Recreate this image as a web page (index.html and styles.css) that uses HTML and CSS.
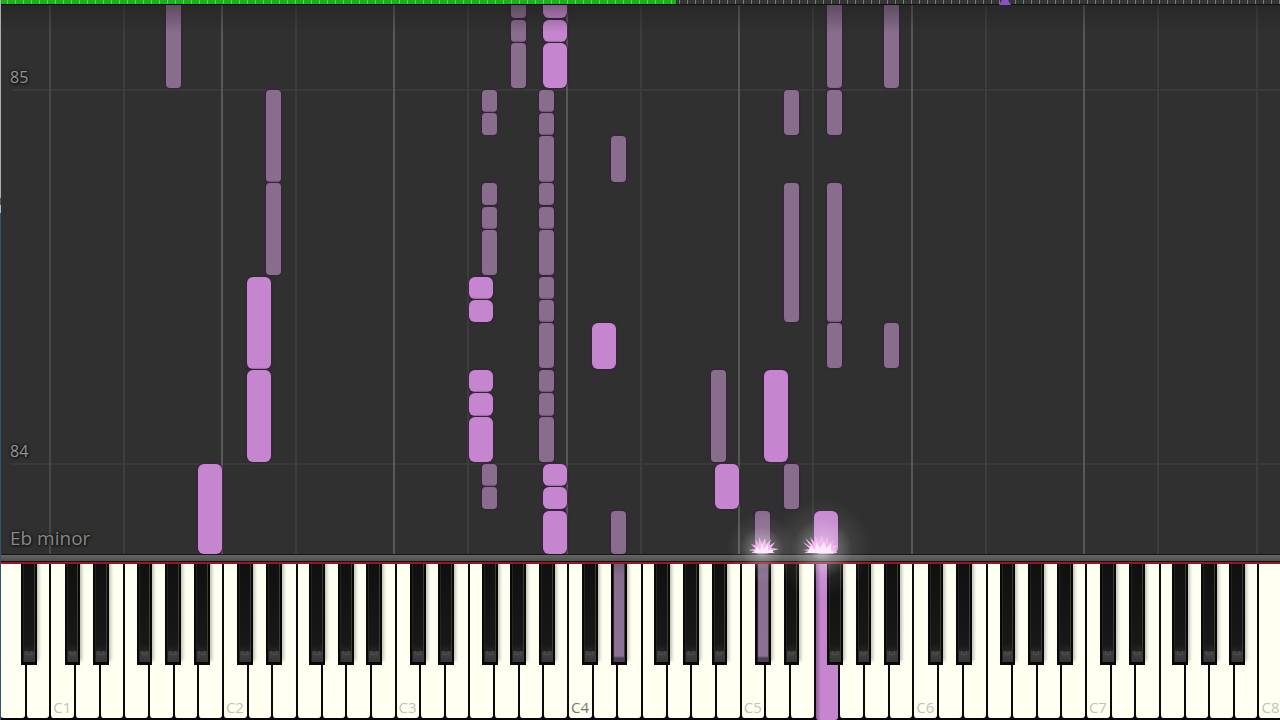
FILE: index.html
```html
<!DOCTYPE html>
<html lang="en">
<head>
<meta charset="utf-8">
<title>Piano roll</title>
<link rel="stylesheet" href="styles.css">
</head>
<body>
<main class="player">
  <div class="timeline">
    <div class="played"></div>
    <div class="ticks"></div>
    <svg class="marker" viewBox="0 0 12 5"><path d="M0 5L3 0H9L12 5Z"/></svg>
  </div>
  <section class="roll" id="roll">
    <div class="notes" id="notes"></div>
    <div class="fade"></div>
    <span class="measure m85">85</span>
    <span class="measure m84">84</span>
    <span class="scale">Eb minor</span>
    <svg class="spark spark-a" viewBox="0 0 110 110">
      <defs>
        <radialGradient id="glow">
          <stop offset="0" stop-color="#fff" stop-opacity=".7"/>
          <stop offset=".25" stop-color="#fff" stop-opacity=".3"/>
          <stop offset=".6" stop-color="#fff" stop-opacity=".07"/>
          <stop offset="1" stop-color="#fff" stop-opacity="0"/>
        </radialGradient>
        <clipPath id="above"><rect width="110" height="54"/></clipPath>
      </defs>
      <circle cx="54" cy="50" r="36" fill="url(#glow)"/>
      <g clip-path="url(#above)">
        <path fill="#f6bdf2" d="M42 55L46 52L40 51L48 50L43 45L49 47L47 40L51 46L51 38L54 45L57 39L58 46L63 40L61 47L67 43L63 49L71 50L64 52L68 55Z"/>
        <path fill="#ffe9ff" d="M46 55L49 48L52 51L54 44L56 50L60 45L60 51L65 51L64 55Z"/>
      </g>
    </svg>
    <svg class="spark spark-b" viewBox="0 0 110 110">
      <circle cx="57" cy="50" r="50" fill="url(#glow)"/>
      <g clip-path="url(#above)">
        <path fill="#f5b9ef" d="M37 55L43 52L38 51L45 50L38 43L46 48L40 39L48 46L45 38L51 45L50 37L54 43L57 36L59 44L63 38L63 45L69 41L66 47L72 46L70 51L73 55Z"/>
        <path fill="#ffeaff" d="M42 55L46 47L50 51L51 43L55 49L59 43L61 49L66 45L66 51L71 55Z"/>
      </g>
    </svg>
  </section>
  <div class="rail"></div>
  <section class="keyboard"><div class="keys" id="keys"></div></section>
</main>
<script src="piano.js"></script>
</body>
</html>
```
FILE: styles.css
```css
* { box-sizing: border-box; }
body { margin: 0; background: #000; font-family: "Open Sans", "Noto Sans", sans-serif; }
.player { position: relative; display: flex; flex-direction: column; height: 100vh; overflow: hidden; }
.player::after {
  content: ""; position: absolute; left: 0; top: 0; bottom: 0; width: 1px;
  background: linear-gradient(#a9adad 0 27.5%, #555 27.5% 28.5%, #b4b8b8 28.5% 29.6%, #2e536d 29.6%);
}
.timeline { position: relative; flex: none; height: 5px; background: #343434; border-bottom: 1px solid #111; }
.played { width: 52.8%; height: 100%; background: #1fae1f; }
.ticks {
  position: absolute; inset: 0;
  background: repeating-linear-gradient(90deg, transparent 0 7px, #c8ffc866 7px 8px);
}
.marker { position: absolute; left: 78.05%; top: 0; width: 12px; height: 5px; fill: #8c4fc4; }
.roll { position: relative; flex: 1; background: #303030; }
.line, .bar { position: absolute; background: #3d3d3d; }
.line { top: 0; bottom: 0; width: 2px; }
.line.c { background: #585858; }
.line.edge { background: #494949; }
.bar { left: 1%; right: 0; height: 2px; background: #3a3a3a; }
.notes { position: absolute; inset: 0; overflow: hidden; }
.note {
  position: absolute; border-radius: 4px; background: #896d8d;
  box-shadow: 0 0 2px 1px #3b2140;
}
.note.bright { border-radius: 6px; background: #c686cf; }
.fade { position: absolute; inset: 0 0 auto; height: 28px; background: linear-gradient(#1c1c1c66, #30303000); }
.measure, .scale {
  position: absolute; left: 10px; color: #949494;
  text-shadow: 0 0 3px #181818, 0 0 3px #181818, 1px 1px 2px #181818;
}
.measure { font-size: 16px; line-height: 20px; }
.m85 { top: 11.3%; }
.m84 { top: 79.4%; }
.scale { bottom: 3px; font-size: 19px; line-height: 26px; color: #878787; }
.spark { position: absolute; z-index: 2; width: 110px; height: 110px; bottom: -55px; pointer-events: none; }
.spark-a { left: 55.3%; }
.spark-b { left: 59.8%; }
.rail {
  flex: none; height: 10px; border-top: 1px solid #171717; border-bottom: 2px solid #8e1b26;
  background: linear-gradient(#656565, #505050 6px, #111 6px);
}
.keyboard { flex: none; overflow: hidden; background: #050505; }
.keys { display: flex; width: calc(100% + 2px); height: 156px; }
.slot { position: relative; flex: 1; min-width: 0; }
button { margin: 0; padding: 0; border: 0; font: inherit; }
.white {
  display: block; width: 100%; height: 154px; padding: 132px 0 0 2px;
  border-left: 2px solid #0a0a0a; border-radius: 0 0 3px 4px; background: #fffff2;
  color: #c3c3b6; font-size: 15px; line-height: 20px; text-align: left; white-space: nowrap;
}
.slot:first-child .white { border-left: 0; }
.white.middle { color: #77776e; }
.white.down { height: 156px; background: linear-gradient(90deg, #8f5f98, #c686cf 5px); }
.black {
  position: absolute; z-index: 1; top: 0; width: 64%; height: 101px;
  border: solid #080808; border-width: 0 2px 3px;
  background: linear-gradient(#101010, #181818 80px, #242424 87px, #414141 88px, #343434);
  box-shadow: 2px -4px 3px #6666606b, inset -1px 0 #3c3b34, inset 1px 0 #24241f;
}
.black::after {
  content: ""; position: absolute; left: 3px; right: 3px; bottom: 7px; height: 3px;
  border: solid #4c4c4c; border-width: 0 1px 1px;
}
.black.down { background: linear-gradient(#756078, #896d91 12px, #8c7097 92px, #4b3d52 94px); }
.black.down::after { display: none; }
.c-sharp { left: 62%; }
.d-sharp { left: 78%; }
.f-sharp { left: 54%; }
.g-sharp { left: 70%; }
.a-sharp { left: 86%; }
```
FILE: piano.js
```js
const WIDTH = 1280;
const HEIGHT = 549;
const OFFSET = 5;
const roll = document.getElementById("roll");
const notes = document.getElementById("notes");
const keys = document.getElementById("keys");

function add(parent, tag, cls, style = {}) {
  const el = document.createElement(tag);
  el.className = cls;
  Object.assign(el.style, style);
  parent.append(el);
  return el;
}
const px = x => (x / WIDTH) * 100 + "%";
const py = y => (y / HEIGHT) * 100 + "%";

// Grid lines at every C and F, and at each measure.
const lines = [
  [49, "edge"], [123, ""], [221, "c"], [295, ""], [393, "c"], [467, ""], [566, "c"],
  [640, ""], [738, "c"], [812, ""], [911, "c"], [985, ""], [1083, "c"], [1157, ""], [1256, ""]
];
for (const [x, cls] of lines) roll.prepend(add(roll, "div", "line " + cls, { left: px(x) }));
for (const y of [89, 463]) roll.prepend(add(roll, "div", "bar", { top: py(y - OFFSET) }));

// Note columns: left edge followed by [start, end] spans.
const sharp = [
  [166, [-9, 88]],
  [266, [90, 182], [183, 275]],
  [511, [-9, 18], [20, 42], [43, 88]],
  [482, [90, 112], [113, 135], [183, 205], [207, 229], [230, 275], [464, 486], [487, 509]],
  [539, [90, 112], [113, 135], [136, 182], [183, 205], [207, 229], [230, 275], [277, 299],
    [300, 322], [323, 368], [370, 392], [393, 416], [417, 462]],
  [611, [136, 182], [511, 554]],
  [784, [90, 135], [183, 322], [464, 509]],
  [827, [-9, 88], [90, 135], [183, 322], [323, 368]],
  [884, [-9, 88], [323, 368]],
  [711, [370, 462]],
  [755, [511, 554]]
];
const natural = [
  [247, [277, 369], [370, 462]],
  [198, [464, 554]],
  [469, [277, 299], [300, 322], [370, 392], [393, 416], [417, 462]],
  [543, [-9, 18], [20, 42], [43, 88], [464, 486], [487, 509], [511, 554]],
  [592, [323, 369]],
  [764, [370, 462]],
  [715, [464, 509]],
  [814, [511, 554]]
];
function draw(columns, width, cls) {
  for (const [x, ...spans] of columns)
    for (const [start, end] of spans)
      add(notes, "div", cls, {
        left: px(x), width: px(width), top: py(start - OFFSET), height: py(end - start)
      });
}
draw(sharp, 15, "note");
draw(natural, 24, "note bright");

// 52 white keys from A0, with the black keys hung on their left neighbours.
const names = "CDEFGAB";
for (let i = 0; i < 52; i++) {
  const letter = names[(i + 5) % 7];
  const name = letter + Math.floor((i + 5) / 7);
  const slot = add(keys, "div", "slot");
  const white = add(slot, "button", "white");
  white.setAttribute("aria-label", name);
  if (letter === "C") white.textContent = name;
  if (name === "C4") white.classList.add("middle");
  if (name === "F5") white.classList.add("down");
  if ("CDFGA".includes(letter) && i < 51) {
    const black = add(slot, "button", "black " + letter.toLowerCase() + "-sharp");
    black.setAttribute("aria-label", name + " sharp");
    if (name === "D4" || name === "C5") black.classList.add("down");
  }
}
```
